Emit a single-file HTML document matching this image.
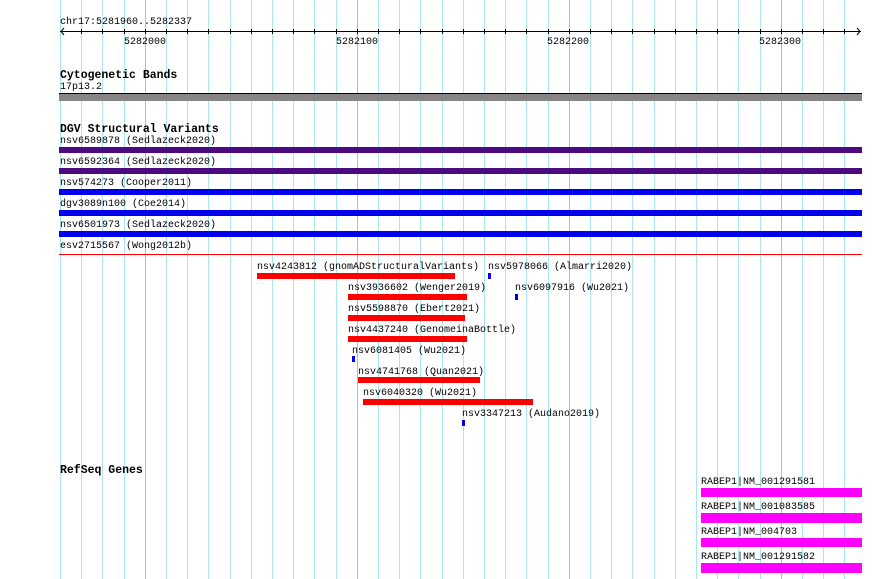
<!DOCTYPE html>
<html><head><meta charset="utf-8"><style>
body{margin:0;width:890px;height:579px;background:#fff;position:relative;overflow:hidden;font-family:"Liberation Mono","DejaVu Sans Mono",monospace;font-size:10px;color:#000}
.t{position:absolute;line-height:10px;white-space:pre;margin-top:2px}
.b{position:absolute;font-weight:bold;font-size:11.5px;line-height:12px;white-space:pre;margin-top:2px}
.r{position:absolute}
</style></head><body>
<svg width="890" height="579" style="position:absolute;left:0;top:0">
<g stroke="#a9e6ef" stroke-width="1">
<line x1="60.5" y1="0" x2="60.5" y2="579"/><line x1="81.5" y1="0" x2="81.5" y2="579"/><line x1="102.5" y1="0" x2="102.5" y2="579"/><line x1="124.5" y1="0" x2="124.5" y2="579"/>
<line x1="166.5" y1="0" x2="166.5" y2="579"/><line x1="187.5" y1="0" x2="187.5" y2="579"/><line x1="208.5" y1="0" x2="208.5" y2="579"/><line x1="230.5" y1="0" x2="230.5" y2="579"/><line x1="251.5" y1="0" x2="251.5" y2="579"/><line x1="272.5" y1="0" x2="272.5" y2="579"/><line x1="293.5" y1="0" x2="293.5" y2="579"/><line x1="314.5" y1="0" x2="314.5" y2="579"/><line x1="336.5" y1="0" x2="336.5" y2="579"/>
<line x1="378.5" y1="0" x2="378.5" y2="579"/><line x1="399.5" y1="0" x2="399.5" y2="579"/><line x1="420.5" y1="0" x2="420.5" y2="579"/><line x1="442.5" y1="0" x2="442.5" y2="579"/><line x1="463.5" y1="0" x2="463.5" y2="579"/><line x1="484.5" y1="0" x2="484.5" y2="579"/><line x1="505.5" y1="0" x2="505.5" y2="579"/><line x1="526.5" y1="0" x2="526.5" y2="579"/><line x1="548.5" y1="0" x2="548.5" y2="579"/>
<line x1="590.5" y1="0" x2="590.5" y2="579"/><line x1="611.5" y1="0" x2="611.5" y2="579"/><line x1="632.5" y1="0" x2="632.5" y2="579"/><line x1="654.5" y1="0" x2="654.5" y2="579"/><line x1="675.5" y1="0" x2="675.5" y2="579"/><line x1="696.5" y1="0" x2="696.5" y2="579"/><line x1="717.5" y1="0" x2="717.5" y2="579"/><line x1="738.5" y1="0" x2="738.5" y2="579"/><line x1="760.5" y1="0" x2="760.5" y2="579"/>
<line x1="802.5" y1="0" x2="802.5" y2="579"/><line x1="823.5" y1="0" x2="823.5" y2="579"/><line x1="844.5" y1="0" x2="844.5" y2="579"/>
</g>
<g stroke="#8ccbe9" stroke-width="1">
<line x1="145.5" y1="0" x2="145.5" y2="579"/><line x1="357.5" y1="0" x2="357.5" y2="579"/><line x1="569.5" y1="0" x2="569.5" y2="579"/><line x1="781.5" y1="0" x2="781.5" y2="579"/>
</g>
<g stroke="#000" stroke-width="1" fill="none">
<line x1="60" y1="31.5" x2="861" y2="31.5"/>
<polyline points="64,28 61,31.5 64,35"/>
<polyline points="857,28 860,31.5 857,35"/>
<path d="M81.5 29v5M102.5 29v5M124.5 29v5M145.5 29v5M166.5 29v5M187.5 29v5M208.5 29v5M230.5 29v5M251.5 29v5M272.5 29v5M293.5 29v5M314.5 29v5M336.5 29v5M357.5 29v5M378.5 29v5M399.5 29v5M420.5 29v5M442.5 29v5M463.5 29v5M484.5 29v5M505.5 29v5M526.5 29v5M548.5 29v5M569.5 29v5M590.5 29v5M611.5 29v5M632.5 29v5M654.5 29v5M675.5 29v5M696.5 29v5M717.5 29v5M738.5 29v5M760.5 29v5M781.5 29v5M802.5 29v5M823.5 29v5M844.5 29v5"/>
</g>
</svg>
<div class="t" style="left:60px;top:16px">chr17:5281960..5282337</div>
<div class="t" style="left:124px;top:36px">5282000</div>
<div class="t" style="left:336px;top:36px">5282100</div>
<div class="t" style="left:547px;top:36px">5282200</div>
<div class="t" style="left:759px;top:36px">5282300</div>

<div class="b" style="left:60px;top:68px">Cytogenetic Bands</div>
<div class="t" style="left:60px;top:81px">17p13.2</div>
<div class="r" style="left:59px;top:93px;width:803px;height:1px;background:#000"></div>
<div class="r" style="left:59px;top:94px;width:803px;height:7px;background:#868686"></div>

<div class="b" style="left:60px;top:122px">DGV Structural Variants</div>
<div class="t" style="left:60px;top:135px">nsv6589878 (Sedlazeck2020)</div>
<div class="r" style="left:59px;top:147px;width:803px;height:6px;background:#4b0a80"></div>
<div class="t" style="left:60px;top:156px">nsv6592364 (Sedlazeck2020)</div>
<div class="r" style="left:59px;top:168px;width:803px;height:6px;background:#4b0a80"></div>
<div class="t" style="left:60px;top:177px">nsv574273 (Cooper2011)</div>
<div class="r" style="left:59px;top:189px;width:803px;height:6px;background:#0000ee"></div>
<div class="t" style="left:60px;top:198px">dgv3089n100 (Coe2014)</div>
<div class="r" style="left:59px;top:210px;width:803px;height:6px;background:#0000ee"></div>
<div class="t" style="left:60px;top:219px">nsv6501973 (Sedlazeck2020)</div>
<div class="r" style="left:59px;top:231px;width:803px;height:6px;background:#0000ee"></div>
<div class="t" style="left:60px;top:240px">esv2715567 (Wong2012b)</div>
<div class="r" style="left:59px;top:254px;width:803px;height:1px;background:#f00"></div>

<div class="t" style="left:257px;top:261px">nsv4243812 (gnomADStructuralVariants)</div>
<div class="r" style="left:257px;top:273px;width:198px;height:6px;background:#f00"></div>
<div class="t" style="left:488px;top:261px">nsv5978066 (Almarri2020)</div>
<div class="r" style="left:488px;top:273px;width:3px;height:6px;background:#0000ee"></div>

<div class="t" style="left:348px;top:282px">nsv3936602 (Wenger2019)</div>
<div class="r" style="left:348px;top:294px;width:119px;height:6px;background:#f00"></div>
<div class="t" style="left:515px;top:282px">nsv6097916 (Wu2021)</div>
<div class="r" style="left:515px;top:294px;width:3px;height:6px;background:#0000ee"></div>

<div class="t" style="left:348px;top:303px">nsv5598870 (Ebert2021)</div>
<div class="r" style="left:348px;top:315px;width:117px;height:6px;background:#f00"></div>

<div class="t" style="left:348px;top:324px">nsv4437240 (GenomeinaBottle)</div>
<div class="r" style="left:348px;top:336px;width:119px;height:6px;background:#f00"></div>

<div class="t" style="left:352px;top:345px">nsv6081405 (Wu2021)</div>
<div class="r" style="left:352px;top:356px;width:3px;height:6px;background:#0000ee"></div>

<div class="t" style="left:358px;top:366px">nsv4741768 (Quan2021)</div>
<div class="r" style="left:358px;top:377px;width:122px;height:6px;background:#f00"></div>

<div class="t" style="left:363px;top:387px">nsv6040320 (Wu2021)</div>
<div class="r" style="left:363px;top:399px;width:170px;height:6px;background:#f00"></div>

<div class="t" style="left:462px;top:408px">nsv3347213 (Audano2019)</div>
<div class="r" style="left:462px;top:420px;width:3px;height:6px;background:#0000ee"></div>

<div class="b" style="left:60px;top:463px">RefSeq Genes</div>
<div class="t" style="left:701px;top:476px">RABEP1|NM_001291581</div>
<div class="r" style="left:701px;top:488px;width:161px;height:9px;background:#f0f"></div>
<div class="t" style="left:701px;top:501px">RABEP1|NM_001083585</div>
<div class="r" style="left:701px;top:513px;width:161px;height:10px;background:#f0f"></div>
<div class="t" style="left:701px;top:526px">RABEP1|NM_004703</div>
<div class="r" style="left:701px;top:538px;width:161px;height:9px;background:#f0f"></div>
<div class="t" style="left:701px;top:551px">RABEP1|NM_001291582</div>
<div class="r" style="left:701px;top:563px;width:161px;height:10px;background:#f0f"></div>
</body></html>
